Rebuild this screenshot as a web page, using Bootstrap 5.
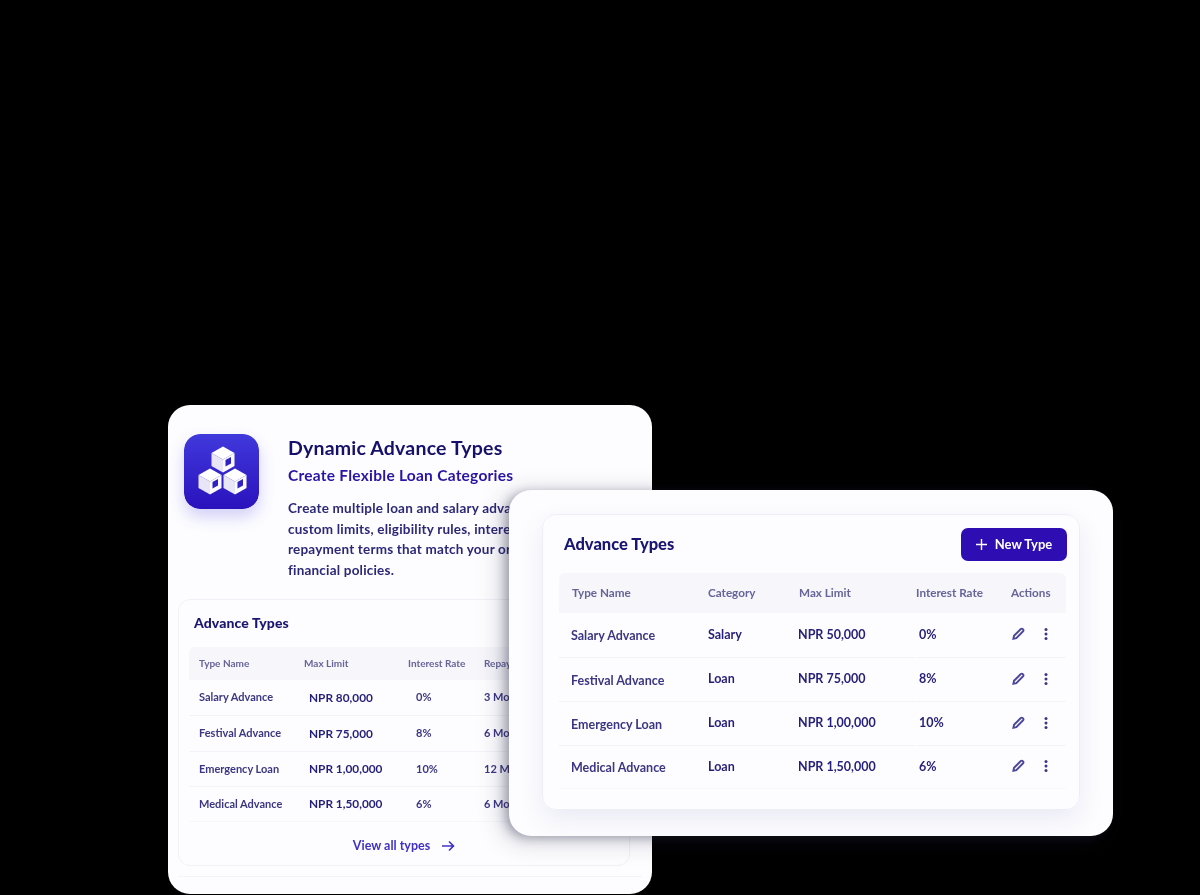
<!DOCTYPE html>
<html lang="en">
<head>
    <meta charset="UTF-8">
    <meta name="viewport" content="width=device-width, initial-scale=1.0">
    <title>Dynamic Advance Types</title>
    <link href="https://cdn.jsdelivr.net/npm/bootstrap@5.3.0/dist/css/bootstrap.min.css" rel="stylesheet">
    <style>
        body { background: #000; font-family: "Lato", "Noto Sans", sans-serif; height: 895px; overflow: hidden; }
        .stage { position: relative; width: 1200px; height: 895px; overflow: hidden; }
        .sheet { position: absolute; background: #fdfdff; border-radius: 22px; overflow: hidden; }
        .sheet > * { filter: blur(.35px); }
        .sheet-back { left: 168px; top: 405px; width: 484px; height: 489px; padding: 29px 10px 0 16px; }
        .sheet-front { left: 509px; top: 490px; width: 604px; height: 346px; padding: 24px 33px 0 33px; box-shadow: -4px 2px 10px rgba(40, 40, 70, .3), -6px 4px 24px rgba(40, 40, 70, .25); }
        .app-icon { width: 75px; height: 75px; flex: none; border-radius: 16px; box-shadow: 0 8px 16px rgba(60, 50, 220, .22); }
        .hero-text { margin-left: 29px; width: 350px; }
        .hero-title { color: #15106a; font-size: 19.5px; font-weight: 700; letter-spacing: .2px; line-height: 28px; margin: 0; }
        .hero-sub { color: #2a14a4; font-size: 15.5px; font-weight: 700; letter-spacing: .25px; line-height: 24px; margin: 1px 0 11px; }
        .hero-desc { color: #2c2878; font-size: 13.5px; font-weight: 700; letter-spacing: .2px; line-height: 20.7px; margin: 0; white-space: nowrap; width: 224px; overflow: hidden; }
        .inner-back { margin: 18px 12px 0 -6px; height: 267px; background: #fdfdff; border: 1px solid #f0f0f6; border-radius: 12px; padding: 0 10px; }
        .inner-title { color: #1a1570; font-size: 14px; font-weight: 900; letter-spacing: .1px; line-height: 20px; padding: 13px 5px 14px; margin: 0; }
        .inner-front { height: 296px; border: 1px solid #eeeef9; border-radius: 14px; box-shadow: 0 10px 24px rgba(70, 70, 160, .1); padding: 13px 12px 0 16px; }
        .front-title { color: #1a1570; font-size: 16.5px; font-weight: 900; margin: 0 0 0 5px; }
        .new-btn { background: #2e0db2; border: 0; border-radius: 7px; color: #fff; font-size: 13px; font-weight: 700; width: 106px; height: 33px; padding: 0; }
        .new-btn svg { margin-right: 8px; vertical-align: -1px; }
        .type-table { table-layout: fixed; margin: 0; --bs-table-bg: transparent; border-collapse: separate; border-spacing: 0; }
        .type-table th { background: #f6f6fb; color: #66659a; font-weight: 700; border: 0; padding: 0; vertical-align: middle; }
        .type-table th:first-child { border-radius: 6px 0 0 0; }
        .type-table th:last-child { border-radius: 0 6px 0 0; }
        .type-table td { color: #3b3782; font-weight: 700; border: 0; border-top: 1px solid #f3f3f9; padding: 0; vertical-align: middle; }
        .type-table tr:first-child td { border-top: 0; }
        .type-table tr:last-child td { border-bottom: 1px solid #f6f6fb; }
        .table-back { width: 431px; font-size: 11px; }
        .table-back th { height: 33px; font-size: 10px; }
        .table-back td { height: 35.5px; }
        .table-back .first-col { padding-left: 10px; }
        .table-back .strong-cell, .table-front .strong-cell { color: #241f78; }
        .table-back .strong-cell { font-size: 11.8px; }
        .table-front { width: 507px; font-size: 12.5px; margin-top: 12px; }
        .table-front th { height: 40px; font-size: 11.7px; }
        .table-front th.first-col { padding-left: 13px; }
        .table-front td { height: 44px; }
        .table-front td.first-col { padding-left: 12px; padding-top: 3px; }
        .table-front .limit-cell { padding-right: 2px; position: relative; left: -1px; }
        .action-icons { margin-bottom: 2px; }
        .nudge-in { padding-left: 5px !important; }
        .nudge-low { padding-left: 3px !important; }
        .nudge-rate { padding-left: 8px !important; }
        .view-link { color: #4030c8; font-size: 12.5px; font-weight: 700; text-decoration: none; }
        .view-link svg { margin-left: 8px; vertical-align: -2px; }
        .back-foot { height: 50px; }
        .back-rule { border-top: 1px solid #f3f3f8; margin: 10px 0 0 -6px; }
        .dots-icon { margin-left: 19px; }
    </style>
</head>
<body>
    <div class="stage">
        <!-- carte arriere -->
        <div class="sheet sheet-back">
            <div class="d-flex">
                <svg class="app-icon" viewBox="0 0 75 75">
                    <defs>
                        <linearGradient id="iconBg" x1="0" y1="0" x2="0" y2="1">
                            <stop offset="0" stop-color="#4039dc"/>
                            <stop offset="1" stop-color="#2a12bc"/>
                        </linearGradient>
                        <g id="cube">
                            <path d="M0-13 11.5-6.5 0 0-11.5-6.5Z" fill="#fff"/>
                            <path d="M-11.5-6.5 0 0V13L-11.5 6.5Z" fill="#e7e5f6"/>
                            <path d="M11.5-6.5 0 0V13L11.5 6.5Z" fill="#fbfbff"/>
                            <path d="M2.5.5 8-2.6V4L2.5 7Z" fill="#2f22c4"/>
                        </g>
                    </defs>
                    <rect width="75" height="75" rx="16" fill="url(#iconBg)"/>
                    <use href="#cube" x="39" y="25.5"/>
                    <use href="#cube" x="26" y="47.5"/>
                    <use href="#cube" x="51" y="47.5"/>
                </svg>
                <div class="hero-text">
                    <h2 class="hero-title">Dynamic Advance Types</h2>
                    <h3 class="hero-sub">Create Flexible Loan Categories</h3>
                    <p class="hero-desc">Create multiple loan and salary advances with<br>custom limits, eligibility rules, interest rates, and<br>repayment terms that match your organization's<br>financial policies.</p>
                </div>
            </div>
            <div class="inner-back">
                <h4 class="inner-title">Advance Types</h4>
                <table class="table type-table table-back">
                    <colgroup>
                        <col style="width:115px"><col style="width:104px"><col style="width:76px"><col style="width:136px">
                    </colgroup>
                    <thead>
                        <tr><th class="first-col">Type Name</th><th>Max Limit</th><th>Interest Rate</th><th>Repayment</th></tr>
                    </thead>
                    <tbody>
                        <tr><td class="first-col">Salary Advance</td><td class="nudge-in strong-cell">NPR 80,000</td><td class="nudge-rate">0%</td><td>3 Months</td></tr>
                        <tr><td class="first-col">Festival Advance</td><td class="nudge-in strong-cell">NPR 75,000</td><td class="nudge-rate">8%</td><td>6 Months</td></tr>
                        <tr><td class="first-col">Emergency Loan</td><td class="nudge-in strong-cell">NPR 1,00,000</td><td class="nudge-rate">10%</td><td>12 Months</td></tr>
                        <tr><td class="first-col">Medical Advance</td><td class="nudge-in strong-cell">NPR 1,50,000</td><td class="nudge-rate">6%</td><td>6 Months</td></tr>
                    </tbody>
                </table>
                <div class="back-foot d-flex align-items-center justify-content-center">
                    <a class="view-link" href="#">View all types
                        <svg width="14" height="12" viewBox="0 0 14 12" fill="none" stroke="#4030c8" stroke-width="1.6"><path d="M1 6H12.5M8 1.5 12.5 6 8 10.5"/></svg>
                    </a>
                </div>
            </div>
            <div class="back-rule"></div>
        </div>

        <!-- carte avant -->
        <div class="sheet sheet-front">
            <div class="inner-front">
                <div class="d-flex justify-content-between align-items-center">
                    <h4 class="front-title">Advance Types</h4>
                    <button class="btn new-btn" type="button">
                        <svg width="11" height="11" viewBox="0 0 11 11" fill="none" stroke="#fff" stroke-width="1.4"><path d="M5.5 0V11M0 5.5H11"/></svg>New Type
                    </button>
                </div>
                <table class="table type-table table-front">
                    <colgroup>
                        <col style="width:149px"><col style="width:91px"><col style="width:117px"><col style="width:95px"><col style="width:55px">
                    </colgroup>
                    <thead>
                        <tr><th class="first-col">Type Name</th><th>Category</th><th>Max Limit</th><th>Interest Rate</th><th>Actions</th></tr>
                    </thead>
                    <tbody id="frontRows"></tbody>
                </table>
            </div>
        </div>
    </div>

    <script src="https://cdn.jsdelivr.net/npm/bootstrap@5.3.0/dist/js/bootstrap.bundle.min.js"></script>
    <script>
        const rows = [
            ['Salary Advance', 'Salary', 'NPR 50,000', '0%'],
            ['Festival Advance', 'Loan', 'NPR 75,000', '8%'],
            ['Emergency Loan', 'Loan', 'NPR 1,00,000', '10%'],
            ['Medical Advance', 'Loan', 'NPR 1,50,000', '6%']
        ];
        const pencil = '<svg width="14" height="14" viewBox="0 0 14 14" fill="none" stroke="#4c469a" stroke-width="1.9"><path d="M2.4 11.8 3 8.8 9.8 2a1.3 1.3 0 0 1 1.9 0l.4.4a1.3 1.3 0 0 1 0 1.9L5.3 11.1Z"/></svg>';
        const dots = '<svg class="dots-icon" width="4" height="14" viewBox="0 0 4 14" fill="#3b3782"><circle cx="2" cy="2.5" r="1.5"/><circle cx="2" cy="7" r="1.5"/><circle cx="2" cy="11.5" r="1.5"/></svg>';
        document.getElementById('frontRows').innerHTML = rows.map(r => `
            <tr>
                <td class="first-col">${r[0]}</td>
                <td class="strong-cell">${r[1]}</td>
                <td class="strong-cell limit-cell">${r[2]}</td>
                <td class="nudge-low strong-cell">${r[3]}</td>
                <td><div class="d-flex align-items-center action-icons">${pencil}${dots}</div></td>
            </tr>`).join('');
    </script>
</body>
</html>
